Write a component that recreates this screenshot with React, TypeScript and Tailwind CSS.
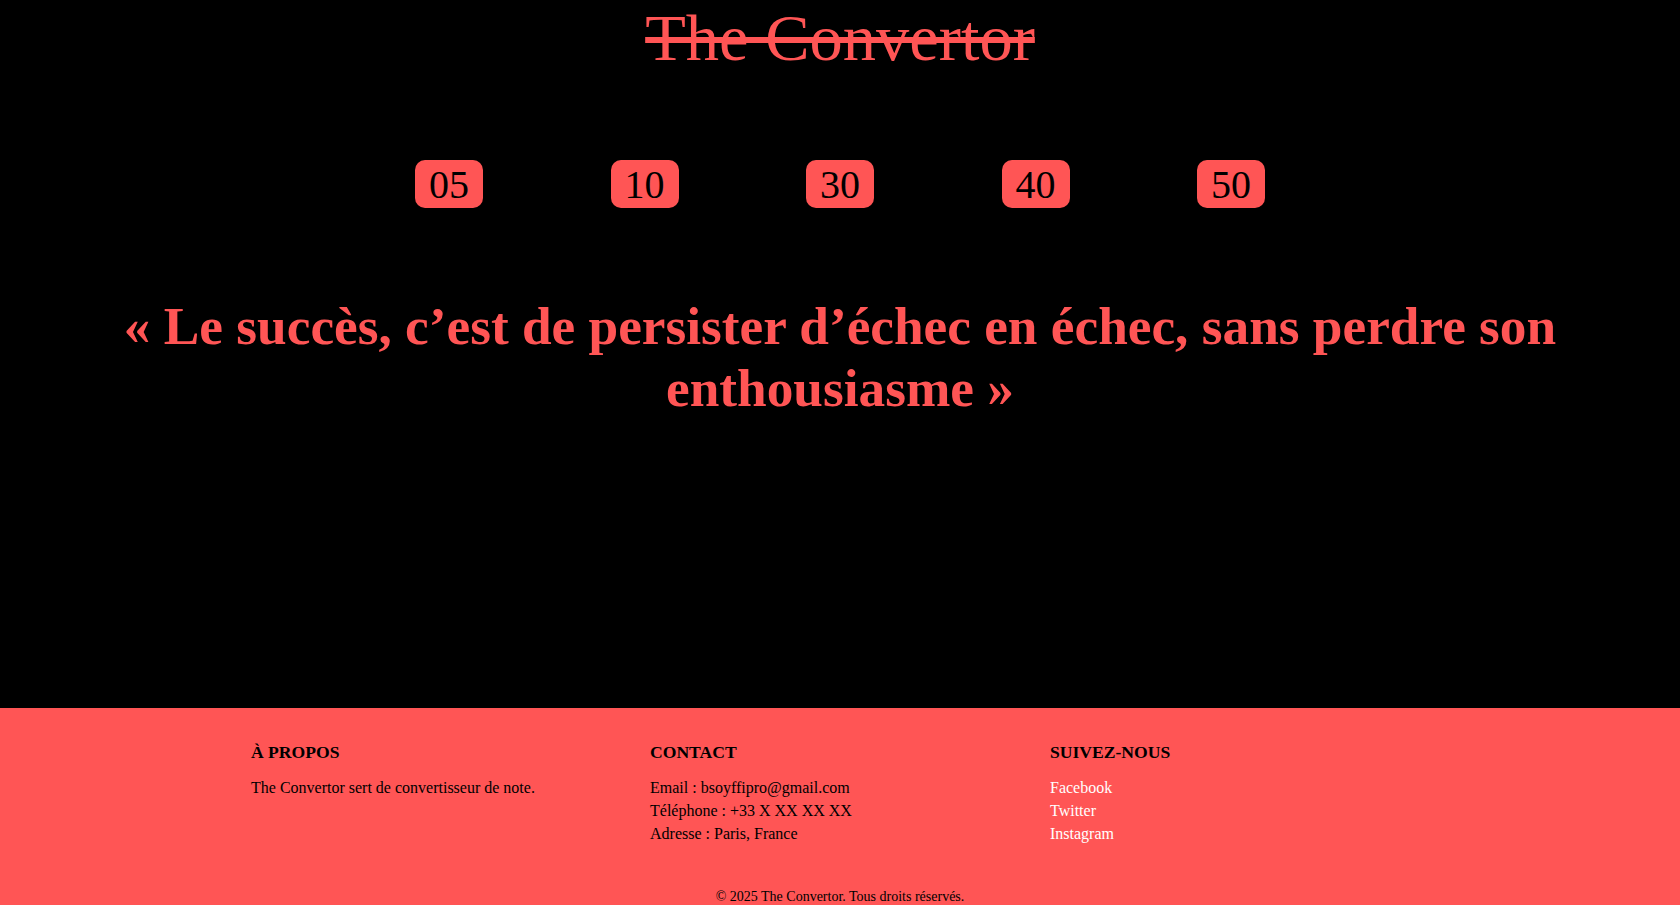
const notes = ["05", "10", "30", "40", "50"];

const App = () => {
  return (
    <div className="bg-black font-['Liberation_Serif','Times_New_Roman',serif] text-black">
      <main className="h-[708px]">
        <h1 className="text-center text-[66.5px] font-normal leading-[76px] text-[#ff5555] line-through">
          The Convertor
        </h1>

        <div className="mt-[84px] flex justify-center gap-[127.5px]">
          {notes.map((n) => (
            <button
              key={n}
              className="h-[48px] w-[68px] rounded-[10px] bg-[#ff5555] pt-[2px] text-[40px] leading-[46px] text-black"
            >
              {n}
            </button>
          ))}
        </div>

        <p className="mx-auto mt-[88px] max-w-[1500px] text-center text-[53.3px] font-bold leading-[62px] text-[#ff5555]">
          « Le succès, c’est de persister d’échec en échec, sans perdre son
          enthousiasme »
        </p>
      </main>

      <footer className="h-[197px] bg-[#ff5555] pt-[34px]">
        <div className="ml-[251px] grid w-[1200px] grid-cols-3">
          <div>
            <h3 className="text-[17.6px] font-bold leading-[20px]">À PROPOS</h3>
            <p className="mt-[14px] text-[16px] leading-[23px]">
              The Convertor sert de convertisseur de note.
            </p>
          </div>
          <div className="ml-[-1px]">
            <h3 className="text-[17.6px] font-bold leading-[20px]">CONTACT</h3>
            <ul className="mt-[14px] text-[16px] leading-[23px]">
              <li>Email : bsoyffipro@gmail.com</li>
              <li>Téléphone : +33 X XX XX XX</li>
              <li>Adresse : Paris, France</li>
            </ul>
          </div>
          <div className="ml-[-1px]">
            <h3 className="text-[17.6px] font-bold leading-[20px]">SUIVEZ-NOUS</h3>
            <ul className="mt-[14px] text-[16px] leading-[23px] text-white">
              <li>
                <a href="#">Facebook</a>
              </li>
              <li>
                <a href="#">Twitter</a>
              </li>
              <li>
                <a href="#">Instagram</a>
              </li>
            </ul>
          </div>
        </div>
        <p className="mt-[44px] text-center text-[14px] leading-[16px]">
          © 2025 The Convertor. Tous droits réservés.
        </p>
      </footer>
    </div>
  );
};

export default App;
